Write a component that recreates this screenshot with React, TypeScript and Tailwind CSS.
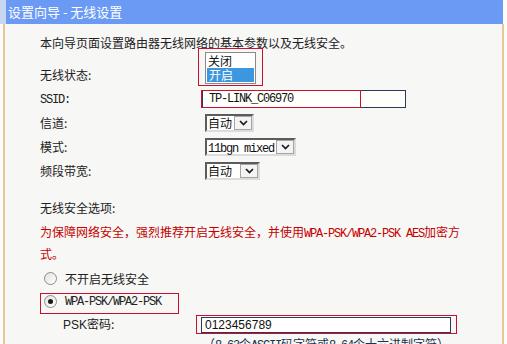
import React from "react";

const cjk = "font-['Noto_Sans_CJK_SC',sans-serif]";
const mono = "font-['Liberation_Mono','Noto_Sans_CJK_SC',monospace] text-[12px] tracking-[-1.2px]";

function Sel({ w, children }: { w: string; children: React.ReactNode }) {
  return (
    <div
      className={`${w} h-[18px] flex bg-white border-2 border-t-[#5c5c5c] border-l-[#5c5c5c] border-b-[#dcdcdc] border-r-[#dcdcdc]`}
    >
      <div className="flex-1 pl-[1px] text-[12px] leading-[14px] text-[#111]">{children}</div>
      <div className="w-[18px] h-full bg-[#f4f4f4] border border-[#a5a5a5] flex items-center justify-center">
        <svg width="9" height="6" viewBox="0 0 9 6">
          <path d="M1 1 L4.5 4.5 L8 1" stroke="#1a1a1a" strokeWidth="1.7" fill="none" />
        </svg>
      </div>
    </div>
  );
}

function Radio({ checked }: { checked?: boolean }) {
  return (
    <div className="w-[13px] h-[13px] rounded-full border border-[#8c8c8c] bg-gradient-to-br from-[#e2e2e2] to-white flex items-center justify-center">
      {checked && <div className="w-[5px] h-[5px] rounded-full bg-[#1a1a1a]" />}
    </div>
  );
}

function Row({ label, children }: { label: React.ReactNode; children?: React.ReactNode }) {
  return (
    <div className="h-[24px] flex items-center">
      <div className="w-[165px] text-[12px] text-[#222]">{label}</div>
      <div className="relative flex items-center">{children}</div>
    </div>
  );
}

export default function App() {
  return (
    <div className={`w-[507px] h-[344px] overflow-hidden bg-[#fbfbfa] ${cjk}`}>
      <div className="h-[24px] flex">
        <div className="w-[6px] bg-[#c9d6f0]" />
        <div className="flex-1 bg-[#6b9af5] text-white text-[13px] leading-[24px] pl-[2px]">
          设置向导 - 无线设置
        </div>
        <div className="w-[4px]" />
      </div>

      <div className="ml-[3px] mr-[3px] h-[320px] border-l-2 border-r-2 border-[#e8c89b] bg-[#f7f7f5] pl-[35px]">
        <div className="pt-[9px] text-[12px] leading-[20px] text-[#222]">
          本向导页面设置路由器无线网络的基本参数以及无线安全。
        </div>

        <div className="mt-[10px]">
          <Row label="无线状态:">
            <div className="absolute left-[-7px] top-[-27px] w-[65px] h-[38px] border border-[#c8102e]" />
            <div className="absolute left-0 top-[-23px] w-[51px] h-[32px] bg-white border border-[#8a8a8a] pt-[1px] text-[12px]">
              <div className="h-[14px] leading-[14px] pl-[2px] text-[#111]">关闭</div>
              <div className="h-[14px] leading-[14px] pl-[2px] mx-[1px] bg-[#3d97de] text-white">开启</div>
            </div>
          </Row>
          <Row label={<span className={mono}>SSID:</span>}>
            <div className="-ml-[3px] w-[204px] h-[18px] bg-[#fffffb] border border-[#2c3a58] flex items-center pl-[6px]">
              <span className={`${mono} text-[#111]`}>TP-LINK_C06970</span>
            </div>
            <div className="absolute left-[-4px] top-0 w-[160px] h-[18px] border border-[#c8102e]" />
          </Row>
          <Row label="信道:">
            <Sel w="w-[49px]">自动</Sel>
          </Row>
          <Row label="模式:">
            <Sel w="w-[91px]">
              <span className={mono}>11bgn mixed</span>
            </Sel>
          </Row>
          <Row label="频段带宽:">
            <Sel w="w-[55px]">自动</Sel>
          </Row>
        </div>

        <div className="mt-[15px] text-[12px] leading-[20px] text-[#222]">无线安全选项:</div>
        <div className="mt-[4px] text-[12px] leading-[19px] text-[#c40000]">
          为保障网络安全，强烈推荐开启无线安全，并使用<span className={mono}>WPA-PSK/WPA2-PSK AES</span>加密方
          <br />
          式。
        </div>

        <div className="mt-[4px]">
          <div className="h-[23px] flex items-center pl-[4px] gap-[8px] text-[12px] text-[#222]">
            <Radio />
            <span>不开启无线安全</span>
          </div>
          <div className="relative h-[23px] flex items-center pl-[4px] gap-[8px] text-[#222]">
            <Radio checked />
            <span className={mono}>WPA-PSK/WPA2-PSK</span>
            <div className="absolute left-0 top-[3px] w-[139px] h-[21px] border border-[#c8102e]" />
          </div>
          <div className="relative h-[23px] flex items-center text-[12px] text-[#222]">
            <div className="w-[161px] pl-[23px]">
              <span className="font-['Liberation_Sans',sans-serif]">PSK</span>密码:
            </div>
            <div className="w-[250px] h-[16px] bg-white border border-[#2c3a58] flex items-center pl-[3px] font-['Liberation_Sans',sans-serif] text-[12px] text-[#111]">
              0123456789
            </div>
            <div className="absolute left-[156px] top-[2px] w-[261px] h-[19px] border border-[#c8102e]" />
          </div>
          <div className="pl-[163px] text-[12px] leading-[16px] text-[#20324f]">
            （<span className={mono}>8-63</span>个<span className={mono}>ASCII</span>码字符或<span className={mono}>8-64</span>个十六进制字符）
          </div>
        </div>
      </div>
    </div>
  );
}
